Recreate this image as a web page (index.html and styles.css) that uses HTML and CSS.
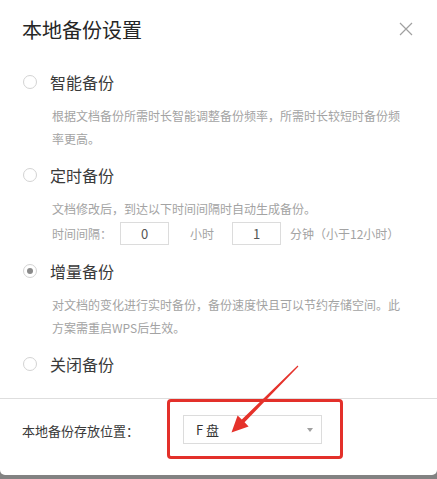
FILE: index.html
```html
<!DOCTYPE html>
<html lang="zh-CN">
<head>
<meta charset="utf-8">
<title>本地备份设置</title>
<link rel="stylesheet" href="styles.css">
</head>
<body>
<div class="dialog">
  <div class="header">
    <div class="title">本地备份设置</div>
    <svg class="close" width="14" height="14" viewBox="0 0 14 14"><path d="M1 1L13 13M13 1L1 13" stroke="#a0a0a0" stroke-width="1.2" fill="none"/></svg>
  </div>
  <div class="options">
    <div class="option">
      <div class="opt-row"><span class="radio"></span><span class="opt-label">智能备份</span></div>
      <div class="desc">根据文档备份所需时长智能调整备份频率，所需时长较短时备份频率更高。</div>
    </div>
    <div class="option">
      <div class="opt-row"><span class="radio"></span><span class="opt-label">定时备份</span></div>
      <div class="desc">文档修改后，到达以下时间间隔时自动生成备份。</div>
      <div class="time-row">
        <span class="time-label">时间间隔：</span>
        <span class="num">0</span>
        <span class="unit">小时</span>
        <span class="num">1</span>
        <span class="unit2">分钟（小于12小时）</span>
      </div>
    </div>
    <div class="option">
      <div class="opt-row"><span class="radio checked"></span><span class="opt-label">增量备份</span></div>
      <div class="desc">对文档的变化进行实时备份，备份速度快且可以节约存储空间。此方案需重启WPS后生效。</div>
    </div>
    <div class="option last">
      <div class="opt-row"><span class="radio"></span><span class="opt-label">关闭备份</span></div>
    </div>
  </div>
  <div class="footer">
    <span class="foot-label">本地备份存放位置：</span>
    <div class="select"><span>F 盘</span><span class="caret"></span></div>
  </div>
  <div class="highlight"></div>
  <svg class="arrow" width="437" height="479" viewBox="0 0 437 479">
    <polygon points="231.5,432.5 237.6,415.4 241.8,419.4 297.6,365.6 298.4,366.4 244.6,422.2 248.6,426.4" fill="#e5322b"/>
  </svg>
</div>
</body>
</html>
```
FILE: styles.css
```css
html, body {
  margin: 0;
  padding: 0;
}
body {
  background: #828282;
  width: 437px;
  height: 479px;
  overflow: hidden;
  font-family: "Noto Sans CJK SC", "Microsoft YaHei", sans-serif;
}
.dialog {
  position: relative;
  width: 437px;
  height: 475px;
  background: #fff;
  border-radius: 0 0 5px 5px;
  display: flex;
  flex-direction: column;
}
.header {
  height: 58px;
  display: flex;
  align-items: center;
  justify-content: space-between;
  padding: 0 24px 0 22px;
}
.title {
  font-size: 20px;
  line-height: 30px;
  color: #262626;
  margin-top: 1px;
}
.close {
  display: block;
}
.options {
  padding: 12px 0 22px 23px;
  border-bottom: 1px solid #dedede;
}
.option {
  margin-bottom: 13px;
}
.option.last {
  margin-bottom: 0;
}
.opt-row {
  display: flex;
  align-items: center;
  height: 24px;
}
.radio {
  box-sizing: border-box;
  width: 14px;
  height: 14px;
  border: 1px solid #d3d3d3;
  border-radius: 50%;
  margin-right: 13px;
  display: flex;
  align-items: center;
  justify-content: center;
}
.radio.checked::after {
  content: "";
  width: 6px;
  height: 6px;
  border-radius: 50%;
  background: #8a8a8a;
}
.opt-label {
  font-size: 16px;
  color: #3a3a3a;
  line-height: 24px;
}
.desc {
  margin: 10px 30px 0 29px;
  font-size: 12px;
  line-height: 23px;
  color: #a3a3a3;
}
.time-row {
  margin: 0 0 3px 29px;
  height: 26px;
  display: flex;
  align-items: center;
  font-size: 12px;
  color: #a3a3a3;
}
.time-label {
  width: 68px;
}
.num {
  box-sizing: border-box;
  width: 49px;
  height: 23px;
  border: 1px solid #dcdcdc;
  display: flex;
  align-items: center;
  justify-content: center;
  font-size: 13px;
  color: #555;
}
.unit {
  margin: 0 18px 0 21px;
}
.unit2 {
  margin-left: 9px;
}
.footer {
  flex: 1;
  display: flex;
  align-items: flex-start;
  padding: 16px 0 0 22px;
}
.foot-label {
  font-size: 13px;
  line-height: 29px;
  color: #3a3a3a;
  margin-right: 44px;
  margin-top: 1px;
}
.select {
  box-sizing: border-box;
  width: 139px;
  height: 29px;
  border: 1px solid #dcdcdc;
  display: flex;
  align-items: center;
  justify-content: space-between;
  padding: 0 8px 0 12px;
  font-size: 13px;
  color: #333;
}
.caret {
  width: 0;
  height: 0;
  border-left: 3.5px solid transparent;
  border-right: 3.5px solid transparent;
  border-top: 4px solid #a0a0a0;
}
.highlight {
  position: absolute;
  left: 167px;
  top: 399px;
  width: 176px;
  height: 60px;
  box-sizing: border-box;
  border: 3px solid #e3302a;
  border-radius: 4px;
}
.arrow {
  position: absolute;
  left: 0;
  top: 0;
  pointer-events: none;
}
```
